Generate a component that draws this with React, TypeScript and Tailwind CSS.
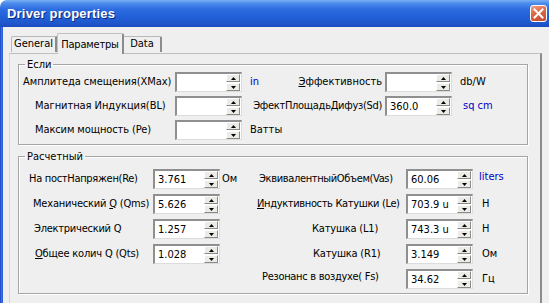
import React from "react";

const FONT = "font-['DejaVu_Sans_Condensed','DejaVu_Sans',sans-serif]";

function Arrow({ up }: { up?: boolean }) {
  return (
    <svg width="5" height="3" viewBox="0 0 5 3">
      {up ? <polygon points="0,3 5,3 2.5,0" fill="#000" /> : <polygon points="0,0 5,0 2.5,3" fill="#000" />}
    </svg>
  );
}

function Btn({ up }: { up?: boolean }) {
  return (
    <div className="h-[8px] w-[14px] bg-[#ecebe6] border-t border-l border-t-white border-l-white border-b border-r border-b-[#8a8a8a] border-r-[#8a8a8a] flex items-center justify-center">
      <Arrow up={up} />
    </div>
  );
}

function Spin({ value }: { value?: string }) {
  return (
    <div className="w-[67px] h-[20px] shrink-0 flex bg-white border-t-2 border-l-2 border-t-[#8f8f8f] border-l-[#8f8f8f] border-b border-r border-b-[#dcdcdc] border-r-[#dcdcdc] relative">
      <div className="flex-1 pl-[3px] leading-[17px] text-[11px] text-black whitespace-nowrap">{value}</div>
      <div className="flex flex-col justify-center gap-[1px] pr-[1px]">
        <Btn up />
        <Btn />
      </div>
    </div>
  );
}

function Group({ title, children, className }: { title: string; children: React.ReactNode; className?: string }) {
  return (
    <fieldset className={"border border-[#a5a5a5] shadow-[inset_1px_1px_0_#fff,1px_1px_0_#fff] " + (className ?? "")}>
      <legend className="ml-[6px] px-[2px] leading-[13px] text-[11px]">{title}</legend>
      {children}
    </fieldset>
  );
}

export default function App() {
  return (
    <div className={"w-[549px] h-[303px] overflow-hidden bg-white " + FONT}>
      <div className="w-[549px] h-[303px] flex flex-col bg-[#efefef] rounded-tl-[7px] overflow-hidden">
        {/* Title bar */}
        <div className="h-[27px] shrink-0 flex items-center justify-between pl-[7px] pr-[2px] bg-[linear-gradient(180deg,#7ab0f4_0%,#4c8cec_12%,#2c6be0_35%,#2361d8_60%,#1f57cc_85%,#1c4cbf_100%)]">
          <span className="font-['Liberation_Sans',Arial,sans-serif] font-bold text-[13px] text-white [text-shadow:1px_1px_0_#0c2a80] tracking-[0.2px]">
            Driver properties
          </span>
          <div className="w-[17px] h-[17px] rounded-[3px] border border-white bg-[linear-gradient(160deg,#f0a08a_0%,#e06a48_40%,#c8462a_100%)] flex items-center justify-center">
            <svg width="11" height="11" viewBox="0 0 11 11">
              <path d="M1.5 1.5 L9.5 9.5 M9.5 1.5 L1.5 9.5" stroke="#fff" strokeWidth="2" strokeLinecap="square" />
            </svg>
          </div>
        </div>

        <div className="flex-1 flex">
          <div className="w-[3px] bg-[linear-gradient(90deg,#1440c0,#3a72e4,#2258d4)]" />
          <div className="flex-1 flex flex-col pl-[6px] pr-[7px] pt-[6px] text-[11px] text-black">
            {/* Tabs */}
            <div className="flex items-end pl-[2px] h-[20px] relative z-10">
              <div className="h-[16px] w-[46px] flex items-center justify-center border-t border-l border-[#b9b9b9] border-r-2 border-r-[#8c8c8c] rounded-tl-[2px] bg-[#efefef] mb-[1px]">
                General
              </div>
              <div className="h-[21px] w-[67px] -mb-[1px] flex items-start pt-[3px] justify-center border-t border-l border-[#c2c2c2] border-r-2 border-r-[#8c8c8c] rounded-t-[2px] bg-[#efefef] tracking-[-0.2px]">
                Параметры
              </div>
              <div className="h-[16px] w-[38px] flex items-center justify-center border-t border-[#b9b9b9] border-r-2 border-r-[#8c8c8c] rounded-tr-[2px] bg-[#efefef] mb-[1px]">
                Data
              </div>
            </div>
            {/* Panel */}
            <div className="flex-1 border-t border-l border-t-[#bfbfbf] border-l-[#d8d8d8] border-r-2 border-r-[#8c8c8c] pl-[8px] pr-[12px] pt-[4px]">
              <Group title="Если" className="pb-[4px]">
                <div className="flex flex-col gap-[4px] pt-[1px]">
                  <div className="flex items-center h-[20px]">
                    <div className="w-[156px] pl-[4px] whitespace-nowrap tracking-[-0.05px]">Амплитеда смещения(XMax)</div>
                    <Spin />
                    <div className="w-[143px] pr-[3px] flex items-center justify-between whitespace-nowrap">
                      <span className="pl-[8px] text-[#0000c8]">in</span>
                      <span>
                        <span className="underline">Э</span>ффективность
                      </span>
                    </div>
                    <Spin />
                    <span className="pl-[8px]">db/W</span>
                  </div>
                  <div className="flex items-center h-[20px]">
                    <div className="w-[156px] pl-[16px] whitespace-nowrap tracking-[-0.05px]">Магнитная Индукция(BL)</div>
                    <Spin />
                    <div className="w-[143px] pr-[3px] flex items-center justify-end whitespace-nowrap tracking-[-0.3px]">
                      <span>ЭфектПлощадьДифуз(Sd)</span>
                    </div>
                    <Spin value="360.0" />
                    <span className="pl-[11px] text-[#0000c8]">sq cm</span>
                  </div>
                  <div className="flex items-center h-[20px]">
                    <div className="w-[156px] pl-[16px] whitespace-nowrap tracking-[-0.1px]">Максим мощность (Pe)</div>
                    <Spin />
                    <span className="pl-[8px]">Ватты</span>
                  </div>
                </div>
              </Group>

              <Group title="Расчетный" className="mt-[5px] pb-[4px]">
                <div className="flex flex-col gap-[5px] pt-[6px]">
                  <div className="flex items-center h-[20px]">
                    <div className="w-[134px] pl-[10px] whitespace-nowrap tracking-[-0.3px]">На постНапряжен(Re)</div>
                    <Spin value="3.761" />
                    <span className="w-[36px] pl-[2px]">Ом</span>
                    <div className="w-[150px] pl-[3px] whitespace-nowrap tracking-[-0.35px]">ЭквивалентныйОбъем(Vas)</div>
                    <Spin value="60.06" />
                    <span className="pl-[6px] text-[#0000c8] -mt-[4px]">liters</span>
                  </div>
                  <div className="flex items-center h-[20px]">
                    <div className="w-[134px] pl-[14px] whitespace-nowrap tracking-[-0.2px]">
                      Механический <span className="underline">Q</span> (Qms)
                    </div>
                    <Spin value="5.626" />
                    <span className="w-[36px]" />
                    <div className="w-[150px] pl-[1px] whitespace-nowrap tracking-[-0.35px]">
                      <span className="underline">И</span>ндуктивность Катушки (Le)
                    </div>
                    <Spin value="703.9 u" />
                    <span className="pl-[9px]">H</span>
                  </div>
                  <div className="flex items-center h-[20px]">
                    <div className="w-[134px] pl-[15px] whitespace-nowrap tracking-[-0.25px]">Электрический Q</div>
                    <Spin value="1.257" />
                    <span className="w-[36px]" />
                    <div className="w-[150px] pl-[56px] whitespace-nowrap tracking-[-0.2px]">Катушка (L1)</div>
                    <Spin value="743.3 u" />
                    <span className="pl-[9px]">H</span>
                  </div>
                  <div className="flex items-center h-[20px]">
                    <div className="w-[134px] pl-[16px] whitespace-nowrap tracking-[-0.2px]">
                      <span className="underline">О</span>бщее колич Q (Qts)
                    </div>
                    <Spin value="1.028" />
                    <span className="w-[36px]" />
                    <div className="w-[150px] pl-[57px] whitespace-nowrap tracking-[-0.2px]">Катушка (R1)</div>
                    <Spin value="3.149" />
                    <span className="pl-[9px]">Ом</span>
                  </div>
                  <div className="flex items-center h-[20px]">
                    <div className="w-[237px]" />
                    <div className="w-[150px] pl-[6px] whitespace-nowrap -mt-[4px] tracking-[-0.3px]">Резонанс в воздухе( Fs)</div>
                    <Spin value="34.62" />
                    <span className="pl-[9px]">Гц</span>
                  </div>
                </div>
              </Group>
            </div>
          </div>
        </div>
      </div>
    </div>
  );
}
